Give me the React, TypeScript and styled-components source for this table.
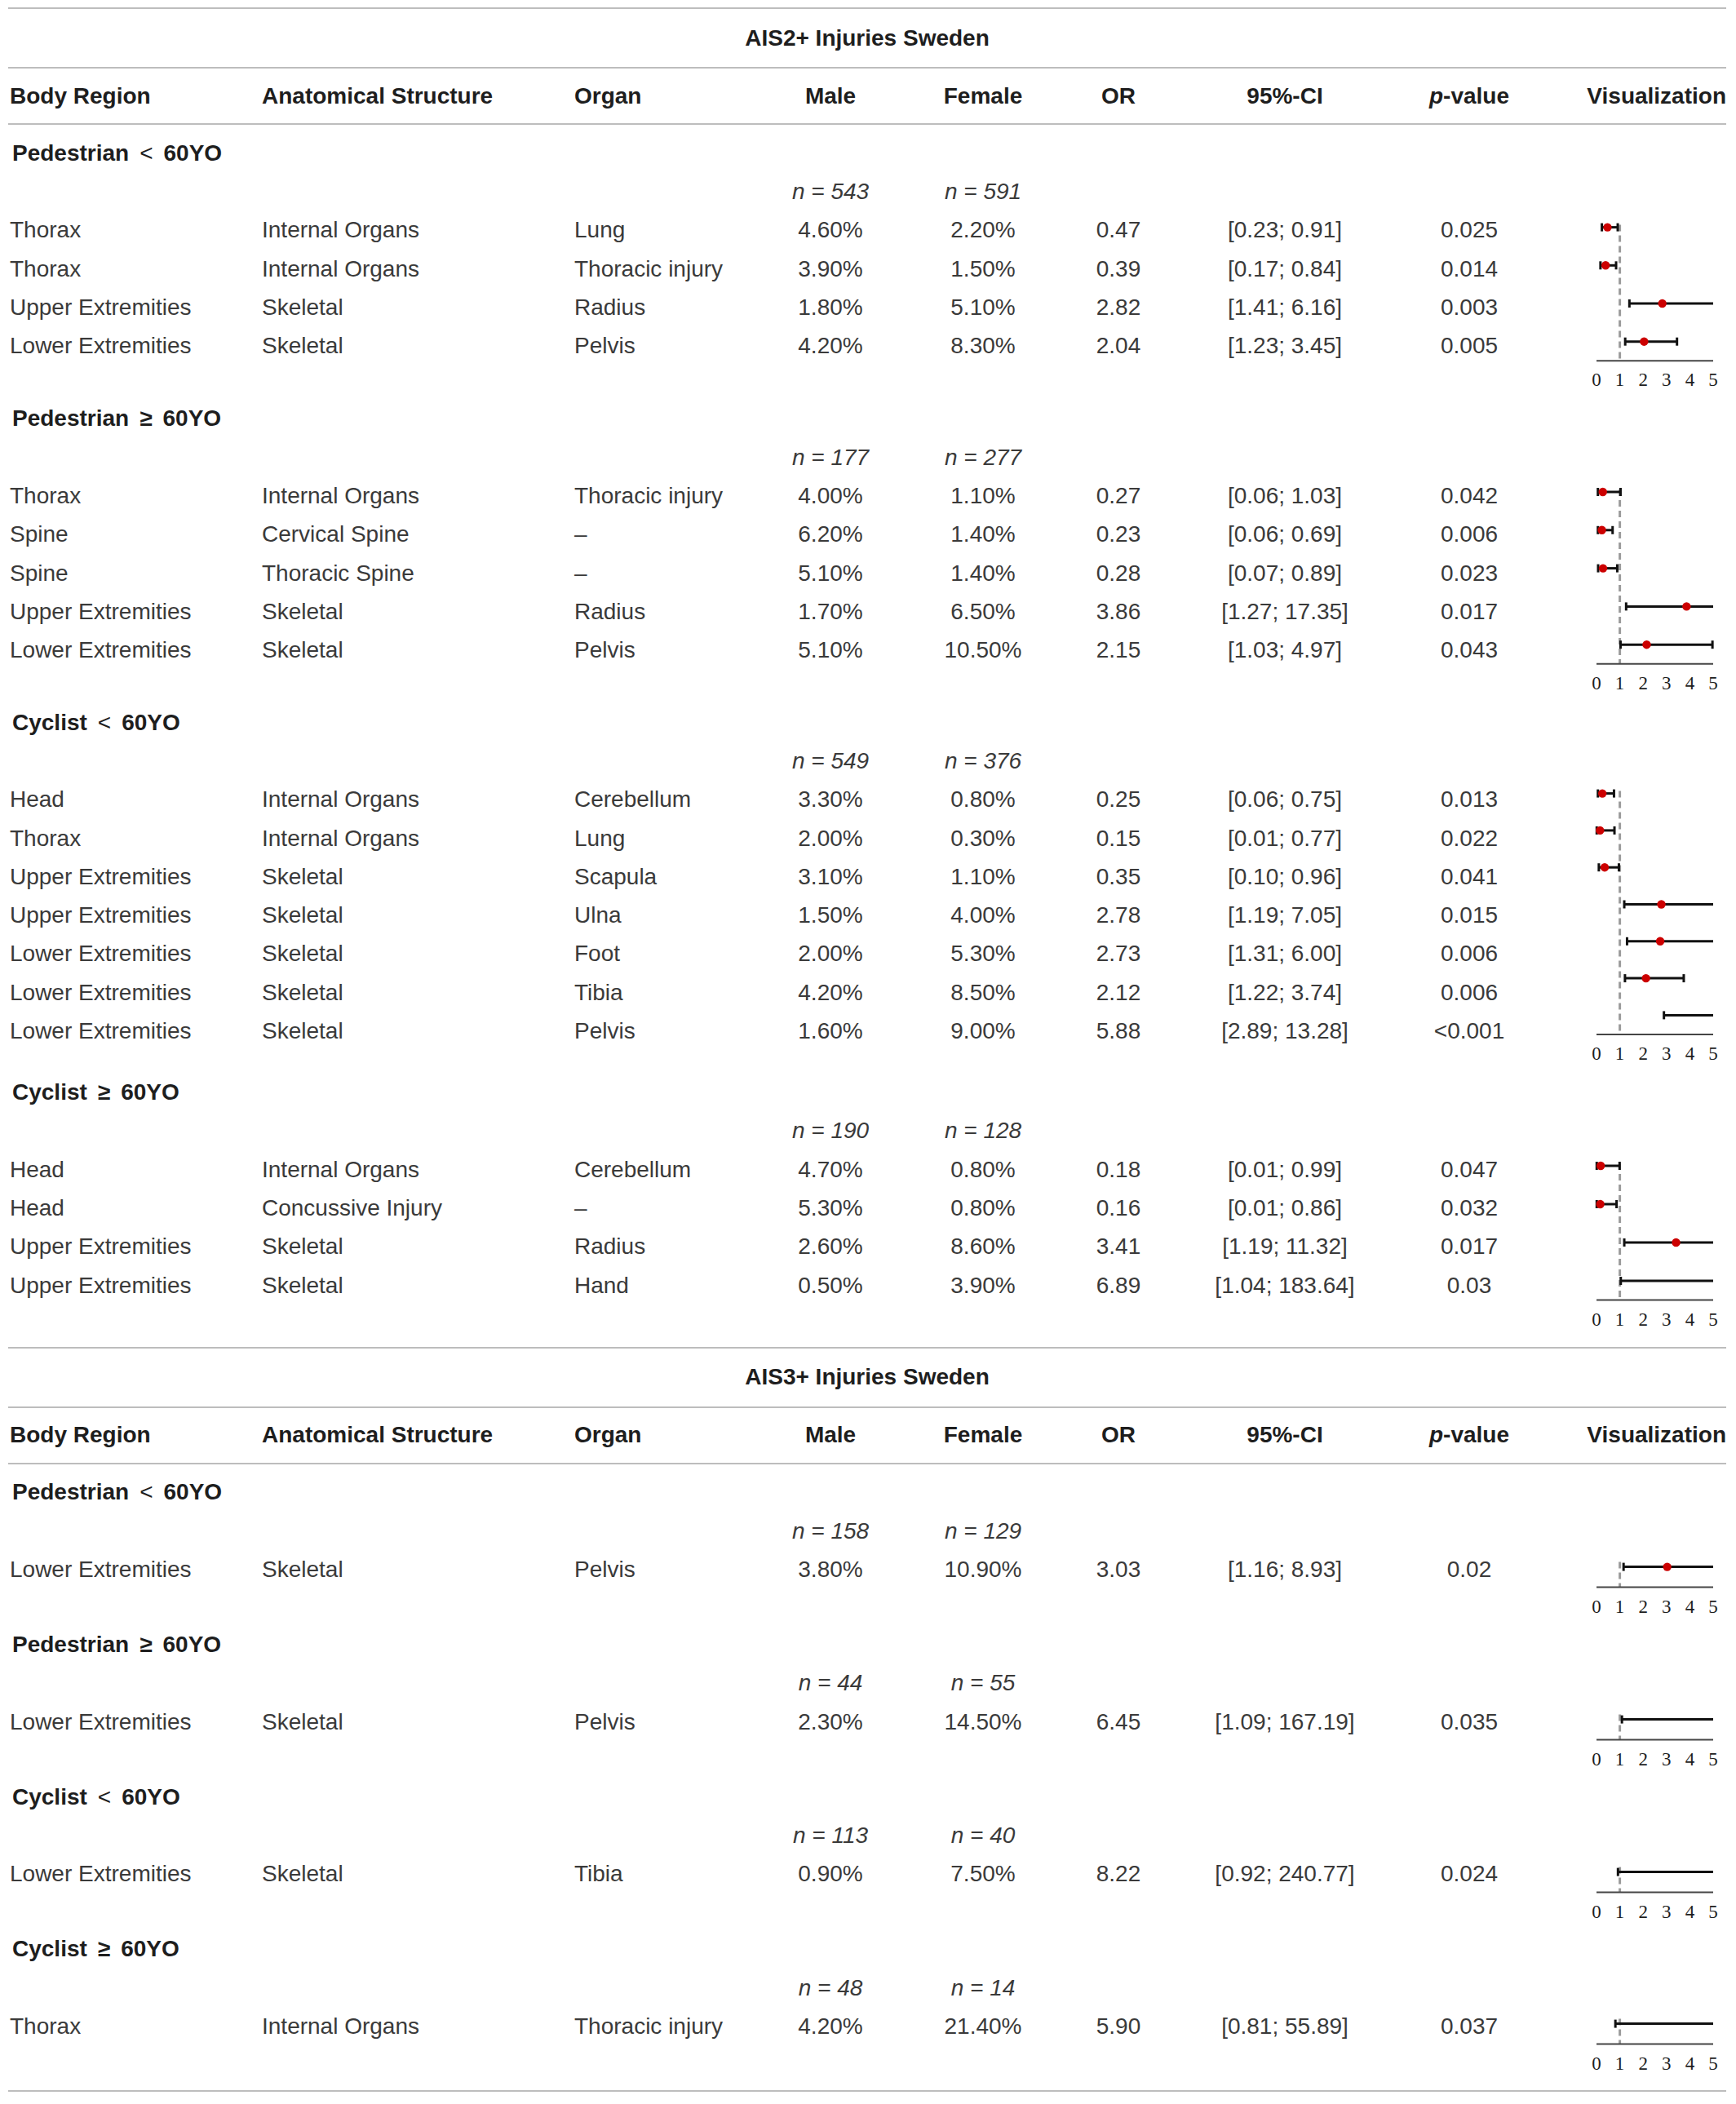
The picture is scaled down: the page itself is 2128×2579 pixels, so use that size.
import React from "react";
import styled, { createGlobalStyle } from "styled-components";

const GlobalStyle = createGlobalStyle`
  html, body { margin: 0; padding: 0; background: #ffffff; }
  body { font-family: "Liberation Sans", Arial, sans-serif; color: #3a3a3a; }
`;

const DATA_COLS = "311px 383px 221px 186px 188px 144px 264px 188px";
const ALL_COLS = `${DATA_COLS} 221px`;
const ROW_H = 47.3;
const UNIT = 28.6;
const X0 = 62;
const xs = (v: number) => X0 + v * UNIT;

type Align = "left" | "center" | "right";

const Page = styled.div`
  width: 2106px;
  padding: 9px 0 0 10px;
`;

const Block = styled.section`
  display: flex;
  flex-direction: column;
`;

const Rule = styled.div`
  height: 2px;
  background: #bdbdbd;
`;

const Caption = styled.div`
  height: 71px;
  display: flex;
  align-items: center;
  justify-content: center;
  font-size: 28px;
  font-weight: 700;
  color: #1e1e1e;
`;

const HeaderRow = styled.div`
  display: grid;
  grid-template-columns: ${ALL_COLS};
  height: 67px;
  align-items: center;
`;

const HeadCell = styled.div<{ $align: Align; $pad?: number }>`
  font-size: 28px;
  font-weight: 700;
  color: #1e1e1e;
  white-space: nowrap;
  text-align: ${(p) => p.$align};
  padding-left: ${(p) => p.$pad ?? 0}px;
`;

const Em = styled.span`
  font-style: italic;
`;

const Body = styled.div<{ $top: number; $bottom: number }>`
  display: flex;
  flex-direction: column;
  padding: ${(p) => p.$top}px 0 ${(p) => p.$bottom}px;
`;

const Section = styled.div`
  display: grid;
  grid-template-columns: 1885px 221px;
  grid-template-rows: auto auto 1fr;
`;

const GroupTitle = styled.div`
  grid-column: 1 / -1;
  height: ${ROW_H}px;
  display: flex;
  align-items: center;
  padding-left: 5px;
  font-size: 28px;
  font-weight: 700;
  color: #1e1e1e;
  white-space: nowrap;
`;

const Op = styled.span<{ $light?: boolean }>`
  font-weight: ${(p) => (p.$light ? 400 : 700)};
  margin: 0 13px 0 13px;
`;

const CountRow = styled.div`
  grid-column: 1 / -1;
  display: grid;
  grid-template-columns: ${ALL_COLS};
  height: ${ROW_H}px;
  align-items: center;
`;

const CountCell = styled.div<{ $col: number }>`
  grid-column: ${(p) => p.$col};
  text-align: center;
  font-size: 28px;
  font-style: italic;
  color: #3a3a3a;
`;

const Rows = styled.div`
  grid-column: 1;
  grid-row: 3;
  display: flex;
  flex-direction: column;
`;

const DataRow = styled.div`
  display: grid;
  grid-template-columns: ${DATA_COLS};
  height: ${ROW_H}px;
  align-items: center;
`;

const Cell = styled.div<{ $align: Align; $pad?: number }>`
  font-size: 28px;
  color: #3a3a3a;
  white-space: nowrap;
  text-align: ${(p) => p.$align};
  padding-left: ${(p) => p.$pad ?? 0}px;
`;

const ChartBox = styled.div`
  grid-column: 2;
  grid-row: 3;
  align-self: start;
`;

const ChartSvg = styled.svg`
  display: block;
`;

type Entry = {
  region: string;
  structure: string;
  organ: string;
  male: string;
  female: string;
  or: number;
  lo: number;
  hi: number;
  ci: string;
  p: string;
};

type Group = {
  label: string;
  op: string;
  age: string;
  nMale: number;
  nFemale: number;
  dot0: number;
  pitch: number;
  axisGap: number;
  tail: number;
  dashLead: number;
  rows: Entry[];
};

const e = (
  region: string,
  structure: string,
  organ: string,
  male: string,
  female: string,
  or: number,
  lo: number,
  hi: number,
  ci: string,
  p: string
): Entry => ({ region, structure, organ, male, female, or, lo, hi, ci, p });

const multi = { axisGap: 23.5, tail: 48, dashLead: 3 };
const single = { dot0: 20.6, pitch: 0, axisGap: 25, tail: 46.5, dashLead: 6 };
const DASH = "–";

const ais2: Group[] = [
  {
    label: "Pedestrian",
    op: "<",
    age: "60YO",
    nMale: 543,
    nFemale: 591,
    dot0: 19.6,
    pitch: 46.7,
    ...multi,
    rows: [
      e("Thorax", "Internal Organs", "Lung", "4.60%", "2.20%", 0.47, 0.23, 0.91, "[0.23; 0.91]", "0.025"),
      e("Thorax", "Internal Organs", "Thoracic injury", "3.90%", "1.50%", 0.39, 0.17, 0.84, "[0.17; 0.84]", "0.014"),
      e("Upper Extremities", "Skeletal", "Radius", "1.80%", "5.10%", 2.82, 1.41, 6.16, "[1.41; 6.16]", "0.003"),
      e("Lower Extremities", "Skeletal", "Pelvis", "4.20%", "8.30%", 2.04, 1.23, 3.45, "[1.23; 3.45]", "0.005"),
    ],
  },
  {
    label: "Pedestrian",
    op: "≥",
    age: "60YO",
    nMale: 177,
    nFemale: 277,
    dot0: 19,
    pitch: 46.8,
    ...multi,
    rows: [
      e("Thorax", "Internal Organs", "Thoracic injury", "4.00%", "1.10%", 0.27, 0.06, 1.03, "[0.06; 1.03]", "0.042"),
      e("Spine", "Cervical Spine", DASH, "6.20%", "1.40%", 0.23, 0.06, 0.69, "[0.06; 0.69]", "0.006"),
      e("Spine", "Thoracic Spine", DASH, "5.10%", "1.40%", 0.28, 0.07, 0.89, "[0.07; 0.89]", "0.023"),
      e("Upper Extremities", "Skeletal", "Radius", "1.70%", "6.50%", 3.86, 1.27, 17.35, "[1.27; 17.35]", "0.017"),
      e("Lower Extremities", "Skeletal", "Pelvis", "5.10%", "10.50%", 2.15, 1.03, 4.97, "[1.03; 4.97]", "0.043"),
    ],
  },
  {
    label: "Cyclist",
    op: "<",
    age: "60YO",
    nMale: 549,
    nFemale: 376,
    dot0: 15.6,
    pitch: 45.3,
    ...multi,
    rows: [
      e("Head", "Internal Organs", "Cerebellum", "3.30%", "0.80%", 0.25, 0.06, 0.75, "[0.06; 0.75]", "0.013"),
      e("Thorax", "Internal Organs", "Lung", "2.00%", "0.30%", 0.15, 0.01, 0.77, "[0.01; 0.77]", "0.022"),
      e("Upper Extremities", "Skeletal", "Scapula", "3.10%", "1.10%", 0.35, 0.1, 0.96, "[0.10; 0.96]", "0.041"),
      e("Upper Extremities", "Skeletal", "Ulna", "1.50%", "4.00%", 2.78, 1.19, 7.05, "[1.19; 7.05]", "0.015"),
      e("Lower Extremities", "Skeletal", "Foot", "2.00%", "5.30%", 2.73, 1.31, 6.0, "[1.31; 6.00]", "0.006"),
      e("Lower Extremities", "Skeletal", "Tibia", "4.20%", "8.50%", 2.12, 1.22, 3.74, "[1.22; 3.74]", "0.006"),
      e("Lower Extremities", "Skeletal", "Pelvis", "1.60%", "9.00%", 5.88, 2.89, 13.28, "[2.89; 13.28]", "<0.001"),
    ],
  },
  {
    label: "Cyclist",
    op: "≥",
    age: "60YO",
    nMale: 190,
    nFemale: 128,
    dot0: 19,
    pitch: 47,
    ...multi,
    rows: [
      e("Head", "Internal Organs", "Cerebellum", "4.70%", "0.80%", 0.18, 0.01, 0.99, "[0.01; 0.99]", "0.047"),
      e("Head", "Concussive Injury", DASH, "5.30%", "0.80%", 0.16, 0.01, 0.86, "[0.01; 0.86]", "0.032"),
      e("Upper Extremities", "Skeletal", "Radius", "2.60%", "8.60%", 3.41, 1.19, 11.32, "[1.19; 11.32]", "0.017"),
      e("Upper Extremities", "Skeletal", "Hand", "0.50%", "3.90%", 6.89, 1.04, 183.64, "[1.04; 183.64]", "0.03"),
    ],
  },
];

const ais3: Group[] = [
  {
    label: "Pedestrian",
    op: "<",
    age: "60YO",
    nMale: 158,
    nFemale: 129,
    ...single,
    rows: [e("Lower Extremities", "Skeletal", "Pelvis", "3.80%", "10.90%", 3.03, 1.16, 8.93, "[1.16; 8.93]", "0.02")],
  },
  {
    label: "Pedestrian",
    op: "≥",
    age: "60YO",
    nMale: 44,
    nFemale: 55,
    ...single,
    rows: [e("Lower Extremities", "Skeletal", "Pelvis", "2.30%", "14.50%", 6.45, 1.09, 167.19, "[1.09; 167.19]", "0.035")],
  },
  {
    label: "Cyclist",
    op: "<",
    age: "60YO",
    nMale: 113,
    nFemale: 40,
    ...single,
    rows: [e("Lower Extremities", "Skeletal", "Tibia", "0.90%", "7.50%", 8.22, 0.92, 240.77, "[0.92; 240.77]", "0.024")],
  },
  {
    label: "Cyclist",
    op: "≥",
    age: "60YO",
    nMale: 48,
    nFemale: 14,
    ...single,
    rows: [e("Thorax", "Internal Organs", "Thoracic injury", "4.20%", "21.40%", 5.9, 0.81, 55.89, "[0.81; 55.89]", "0.037")],
  },
];

function Forest({ g }: { g: Group }) {
  const last = g.dot0 + (g.rows.length - 1) * g.pitch;
  const axis = last + g.axisGap;
  const height = axis + g.tail;
  const ticks = [0, 1, 2, 3, 4, 5];
  const stroke = 3;
  return (
    <ChartSvg width={221} height={height} viewBox={`0 0 221 ${height}`}>
      <line
        x1={xs(1)}
        x2={xs(1)}
        y1={g.dot0 - g.dashLead}
        y2={axis}
        stroke="#9b9b9b"
        strokeWidth={3}
        strokeDasharray="8 5"
      />
      {g.rows.map((r, i) => {
        const y = g.dot0 + i * g.pitch;
        const lo = Math.max(0, r.lo);
        const hi = Math.min(5, r.hi);
        return (
          <g key={i}>
            <line x1={xs(lo)} x2={xs(hi)} y1={y} y2={y} stroke="#111" strokeWidth={stroke} />
            <line x1={xs(lo)} x2={xs(lo)} y1={y - 5} y2={y + 5} stroke="#111" strokeWidth={stroke} />
            {r.hi <= 5 && (
              <line x1={xs(hi)} x2={xs(hi)} y1={y - 5} y2={y + 5} stroke="#111" strokeWidth={stroke} />
            )}
            {r.or <= 5 && <circle cx={xs(r.or)} cy={y} r={5.2} fill="#cc0000" />}
          </g>
        );
      })}
      <line x1={xs(0)} x2={xs(5)} y1={axis} y2={axis} stroke="#454545" strokeWidth={2} />
      {ticks.map((t) => (
        <text
          key={t}
          x={xs(t)}
          y={axis + 31}
          textAnchor="middle"
          fontFamily="'Liberation Serif', 'Times New Roman', serif"
          fontSize={23}
          fill="#1e1e1e"
        >
          {t}
        </text>
      ))}
    </ChartSvg>
  );
}

function GroupSection({ g }: { g: Group }) {
  return (
    <Section>
      <GroupTitle>
        <span>{g.label}</span>
        <Op $light={g.op === "<"}>{g.op}</Op>
        <span>{g.age}</span>
      </GroupTitle>
      <CountRow>
        <CountCell $col={4}>n = {g.nMale}</CountCell>
        <CountCell $col={5}>n = {g.nFemale}</CountCell>
      </CountRow>
      <Rows>
        {g.rows.map((r, i) => (
          <DataRow key={i}>
            <Cell $align="left" $pad={2}>{r.region}</Cell>
            <Cell $align="left">{r.structure}</Cell>
            <Cell $align="left">{r.organ}</Cell>
            <Cell $align="center">{r.male}</Cell>
            <Cell $align="center">{r.female}</Cell>
            <Cell $align="center">{r.or.toFixed(2)}</Cell>
            <Cell $align="center">{r.ci}</Cell>
            <Cell $align="center">{r.p}</Cell>
          </DataRow>
        ))}
      </Rows>
      <ChartBox>
        <Forest g={g} />
      </ChartBox>
    </Section>
  );
}

function TableBlock({ title, groups, bottom }: { title: string; groups: Group[]; bottom: number }) {
  return (
    <Block>
      <Rule />
      <Caption>{title}</Caption>
      <Rule />
      <HeaderRow>
        <HeadCell $align="left" $pad={2}>Body Region</HeadCell>
        <HeadCell $align="left">Anatomical Structure</HeadCell>
        <HeadCell $align="left">Organ</HeadCell>
        <HeadCell $align="center">Male</HeadCell>
        <HeadCell $align="center">Female</HeadCell>
        <HeadCell $align="center">OR</HeadCell>
        <HeadCell $align="center">95%-CI</HeadCell>
        <HeadCell $align="center">
          <Em>p</Em>-value
        </HeadCell>
        <HeadCell $align="right">Visualization</HeadCell>
      </HeaderRow>
      <Rule />
      <Body $top={11} $bottom={bottom}>
        {groups.map((g, i) => (
          <GroupSection key={i} g={g} />
        ))}
      </Body>
    </Block>
  );
}

export default function App() {
  return (
    <>
      <GlobalStyle />
      <Page>
        <TableBlock title="AIS2+ Injuries Sweden" groups={ais2} bottom={9} />
        <TableBlock title="AIS3+ Injuries Sweden" groups={ais3} bottom={10} />
        <Rule />
      </Page>
    </>
  );
}
